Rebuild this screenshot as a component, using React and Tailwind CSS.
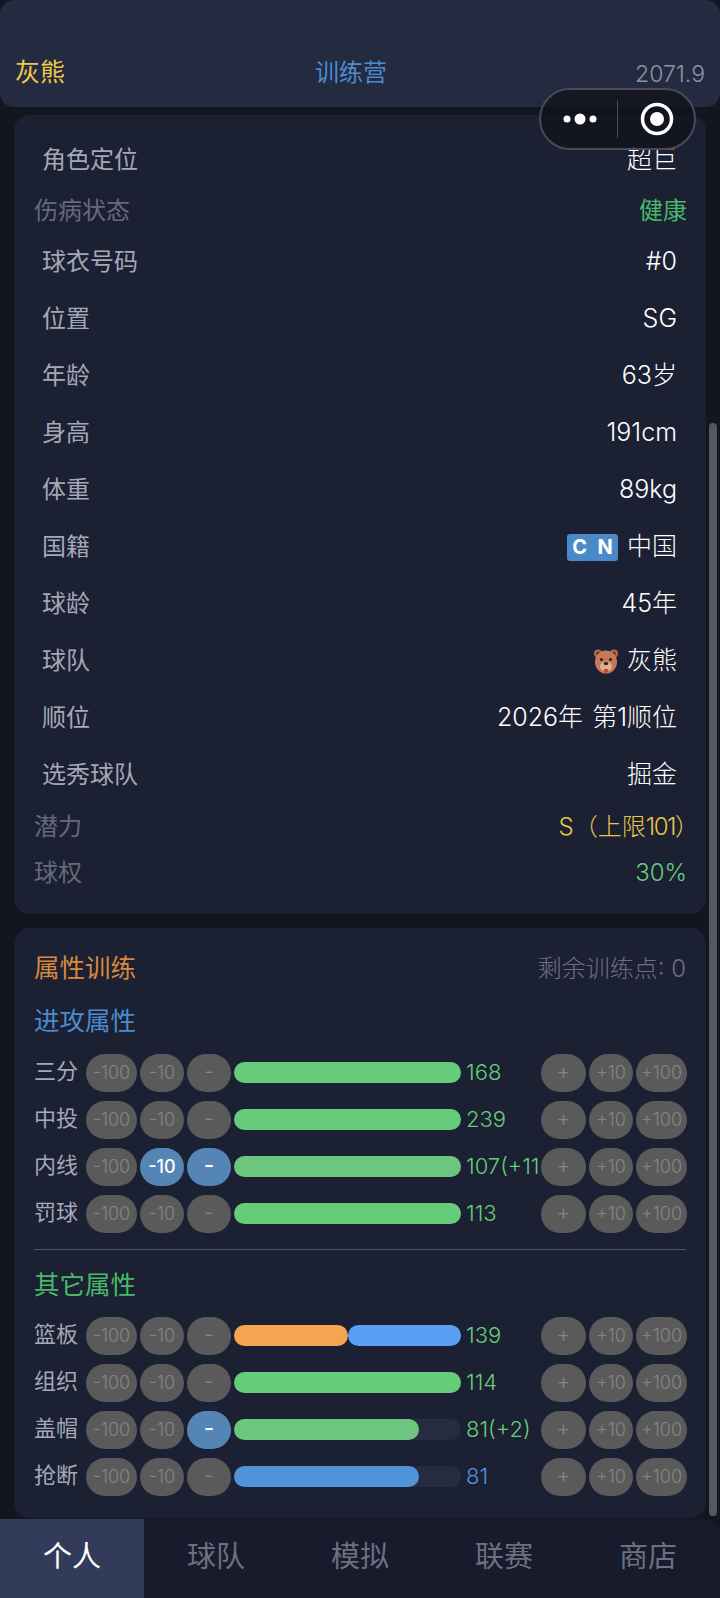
const FONT = 'font-["Inter","Noto_Sans_CJK_SC",sans-serif]';

const infoTop = [
  { label: '球衣号码', value: '#0' },
  { label: '位置', value: 'SG' },
  { label: '年龄', value: '63岁' },
  { label: '身高', value: '191cm' },
  { label: '体重', value: '89kg' },
];

const infoBottom = [
  { label: '球龄', value: '45年' },
  { label: '球队', value: '灰熊', bear: true },
  { label: '顺位', value: '2026年 第1顺位' },
  { label: '选秀球队', value: '掘金' },
];

const attack = [
  { name: '三分', value: '168' },
  { name: '中投', value: '239' },
  { name: '内线', value: '107(+11)', active: 2, soft: true },
  { name: '罚球', value: '113' },
];

const other = [
  { name: '篮板', value: '139', split: true },
  { name: '组织', value: '114' },
  { name: '盖帽', value: '81(+2)', active: 1, soft: true, pct: '81.5%' },
  { name: '抢断', value: '81', blue: true, pct: '81.5%' },
];

const tabs = ['个人', '球队', '模拟', '联赛', '商店'];

function InfoRow({ label, height = 'h-[57px]', children }) {
  return (
    <div className={`flex ${height} items-center justify-between pb-[1px] pl-[28px] pr-[29px]`}>
      <span className="font-normal text-[#a4a8b7]">{label}</span>
      <span className="flex items-center text-[25px] text-white [word-spacing:2px]">{children}</span>
    </div>
  );
}

function StatusRow({ label, color, height = 'h-[47px]', children }) {
  return (
    <div className={`flex ${height} items-center justify-between pb-[1px] pl-[20px] pr-[19px]`}>
      <span className="font-normal text-[#666a7a]">{label}</span>
      <span className={`whitespace-nowrap ${color}`}>{children}</span>
    </div>
  );
}

function Bear() {
  return (
    <svg viewBox="0 0 26 26" className="mr-[8px] h-[26px] w-[26px]">
      <circle cx="5" cy="5.5" r="4" fill="#b5694a" />
      <circle cx="21" cy="5.5" r="4" fill="#b5694a" />
      <circle cx="5" cy="5.5" r="2" fill="#6b3a2a" />
      <circle cx="21" cy="5.5" r="2" fill="#6b3a2a" />
      <ellipse cx="13" cy="14" rx="11" ry="11.5" fill="#c47a5a" />
      <ellipse cx="13" cy="18.5" rx="6" ry="5" fill="#e2b08f" />
      <circle cx="8.5" cy="11.5" r="1.5" fill="#2b1c18" />
      <circle cx="17.5" cy="11.5" r="1.5" fill="#2b1c18" />
      <ellipse cx="13" cy="15.5" rx="2.4" ry="1.6" fill="#2b1c18" />
      <path d="M11 21 h4 v2 a2 2 0 0 1 -4 0 z" fill="#c8443f" />
    </svg>
  );
}

function Flag() {
  return (
    <span className="mr-[9px] flex h-[27px] w-[51px] text-[20px] font-bold leading-none text-white">
      <span className="flex flex-1 items-center justify-center rounded-l-[3px] rounded-r-[1px] bg-[#4a8ac8]">C</span>
      <span className="flex flex-1 items-center justify-center rounded-r-[3px] rounded-l-[1px] bg-[#4a8ac8]">N</span>
    </span>
  );
}

function Btn({ label, width, on, mark }) {
  return (
    <span
      className={`flex h-[38px] shrink-0 items-center justify-center rounded-full ${width} ${
        mark ? 'pb-[3px] text-[22px]' : 'text-[18px]'
      } ${on ? 'bg-[#5585b5] font-medium text-white' : 'bg-[#5a5a5a] text-[#858585]'}`}
    >
      {label}
    </span>
  );
}

function Bar({ stat }) {
  if (stat.split) {
    return (
      <div className="flex h-[21px] w-[227px] shrink-0">
        <div className="h-full w-1/2 rounded-full bg-[#f5a550]" />
        <div className="h-full w-1/2 rounded-full bg-[#5a9ff5]" />
      </div>
    );
  }
  const fill = stat.blue ? 'bg-[#4f94d8]' : stat.soft ? 'bg-[#6dc67f]' : 'bg-[#66cc7a]';
  return (
    <div className="h-[21px] w-[227px] shrink-0 rounded-full bg-[#262c40]">
      <div className={`h-full rounded-full ${fill}`} style={{ width: stat.pct || '100%' }} />
    </div>
  );
}

function StatRow({ stat }) {
  const a = stat.active || 0;
  return (
    <div className="flex h-[47px] items-center">
      <span className="w-[52px] shrink-0 pb-[3px] text-[22px] font-normal text-[#a4a8b7]">{stat.name}</span>
      <div className="flex gap-[3px]">
        <Btn label="-100" width="w-[51px]" />
        <Btn label="-10" width="w-[44px]" on={a >= 2} />
        <Btn label="-" width="w-[44px]" on={a >= 1} mark />
      </div>
      <div className="ml-[3px]">
        <Bar stat={stat} />
      </div>
      <span
        className={`ml-[5px] w-[75px] shrink-0 overflow-hidden whitespace-nowrap text-[22px] ${
          stat.blue ? 'text-[#4f94d8]' : 'text-[#66cc7a]'
        }`}
      >
        {stat.value}
      </span>
      <div className="flex gap-[3px]">
        <Btn label="+" width="w-[45px]" mark />
        <Btn label="+10" width="w-[44px]" />
        <Btn label="+100" width="w-[51px]" />
      </div>
    </div>
  );
}

export default function App() {
  return (
    <div className={`${FONT} relative flex h-[1598px] w-[720px] flex-col overflow-hidden bg-[#13151f] text-[24px] font-light`}>
      <header className="flex h-[107px] shrink-0 items-end justify-between rounded-[14px] bg-[#242a40] px-[15px] pb-[16px]">
        <span className="w-[100px] text-[25px] font-normal text-[#ecc94b]">灰熊</span>
        <span className="mr-[18px] font-normal text-[#4a8ccf]">训练营</span>
        <span className="w-[100px] text-right text-[23px] text-[#8b93a7]">2071.9</span>
      </header>

      {/* WeChat mini program capsule */}
      <div className="absolute left-[539px] top-[88px] flex h-[62px] w-[157px] items-center rounded-full border-2 border-[#484b57] bg-[#11131c]/80">
        <svg viewBox="0 0 36 12" className="ml-[21px] h-[12px] w-[36px]">
          <circle cx="5" cy="6" r="3.5" fill="#fff" />
          <circle cx="18" cy="6" r="5.5" fill="#fff" />
          <circle cx="31" cy="6" r="3.5" fill="#fff" />
        </svg>
        <div className="ml-[19px] h-[38px] w-px bg-[#484b57]" />
        <svg viewBox="0 0 34 34" className="ml-[22px] h-[34px] w-[34px]">
          <circle cx="17" cy="17" r="14.5" fill="none" stroke="#fff" strokeWidth="3.5" />
          <circle cx="17" cy="17" r="7" fill="#fff" />
        </svg>
      </div>

      <main className="flex min-h-0 flex-1 flex-col px-[14px] pt-[8px]">
        <section className="flex h-[799px] shrink-0 flex-col rounded-[16px] bg-[#1c2033] pt-[17px]">
          <InfoRow label="角色定位" height="h-[56px]">超巨</InfoRow>
          <StatusRow label="伤病状态" color="font-normal text-[#48b96a]" height="h-[46px]">健康</StatusRow>
          {infoTop.map((r) => (
            <InfoRow key={r.label} label={r.label}>{r.value}</InfoRow>
          ))}
          <InfoRow label="国籍">
            <Flag />
            中国
          </InfoRow>
          {infoBottom.map((r) => (
            <InfoRow key={r.label} label={r.label}>
              {r.bear && <Bear />}
              {r.value}
            </InfoRow>
          ))}
          <StatusRow label="潜力" color="text-[#e8c547]" height="h-[46px]">
            S（上限<span className="tracking-[-1.5px]">101</span><span className="-mr-[12px]">）</span>
          </StatusRow>
          <StatusRow label="球权" color="text-[#66cc7a]">30%</StatusRow>
        </section>

        <section className="mt-[14px] flex h-[590px] shrink-0 flex-col rounded-[16px] bg-[#1c2033] px-[20px] pt-[24px]">
          <div className="flex h-[36px] items-center justify-between pb-[3px]">
            <span className="text-[25.5px] font-normal text-[#d9893a]">属性训练</span>
            <span className="text-[24px] text-[#6c7080]">剩余训练点: 0</span>
          </div>
          <h2 className="mt-[17px] flex h-[36px] items-center pb-[3px] text-[25.5px] font-normal text-[#4a8ccf]">进攻属性</h2>
          <div className="mt-[8px]">
            {attack.map((s) => (
              <StatRow key={s.name} stat={s} />
            ))}
          </div>
          <div className="mt-[12px] h-px bg-[#4d5163]" />
          <h2 className="mt-[19px] flex h-[36px] items-center pb-[3px] text-[25.5px] font-normal text-[#48b96a]">其它属性</h2>
          <div className="mt-[7px]">
            {other.map((s) => (
              <StatRow key={s.name} stat={s} />
            ))}
          </div>
        </section>
      </main>

      {/* scrollbar */}
      <div className="absolute left-[709px] top-[423px] h-[1093px] w-[8px] rounded-full bg-[#555862]" />

      <nav className="flex h-[79px] shrink-0 rounded-tr-[16px] bg-[#181b2c] text-[29px] font-normal">
        {tabs.map((t, i) => (
          <span
            key={t}
            className={`flex w-[144px] items-center justify-center pb-[3px] ${
              i === 0 ? 'bg-[#333b5a] text-white' : 'text-[#6c7080]'
            }`}
          >
            {t}
          </span>
        ))}
      </nav>
    </div>
  );
}
